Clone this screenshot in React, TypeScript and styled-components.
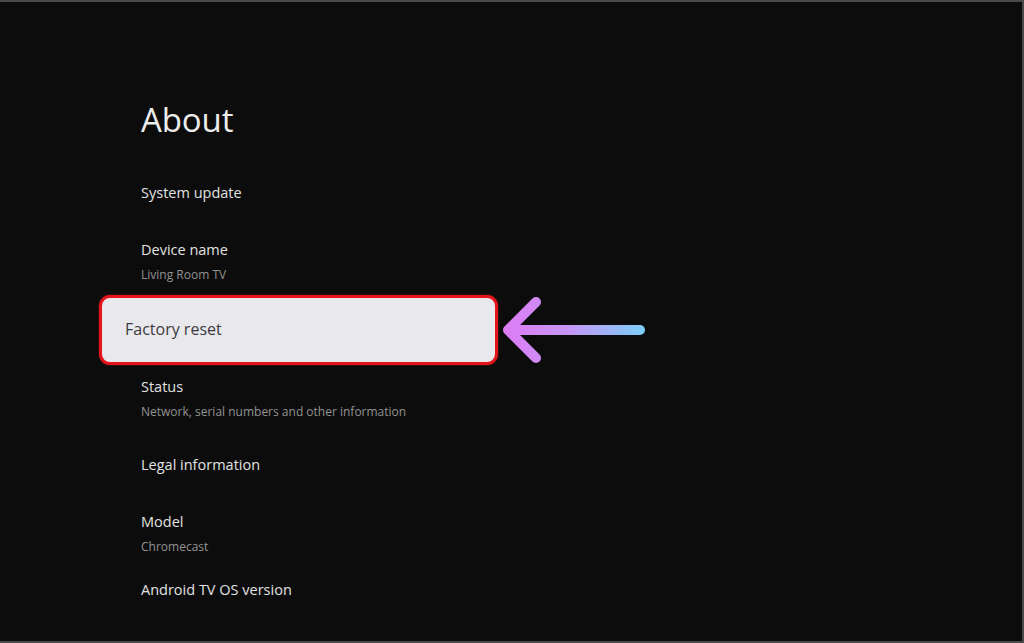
import React from 'react';
import styled, { createGlobalStyle } from 'styled-components';

const GlobalStyle = createGlobalStyle`
  html, body {
    margin: 0;
    padding: 0;
    background: #0b0b0b;
  }
  * {
    box-sizing: border-box;
  }
`;

type Entry = {
  title: string;
  subtitle?: string;
  top: number;
  focused?: boolean;
};

const entries: Entry[] = [
  { title: 'System update', top: 43 },
  { title: 'Device name', subtitle: 'Living Room TV', top: 37 },
  { title: 'Factory reset', top: 7, focused: true },
  { title: 'Status', subtitle: 'Network, serial numbers and other information', top: 10 },
  { title: 'Legal information', top: 32 },
  { title: 'Model', subtitle: 'Chromecast', top: 37 },
  { title: 'Android TV OS version', top: 22 },
];

const App = () => {
  return (
    <>
      <GlobalStyle />
      <Screen>
        <Panel>
          <Heading>About</Heading>
          <List>
            {entries.map((entry) =>
              entry.focused ? (
                <FocusRow key={entry.title} $top={entry.top}>
                  <FocusCard>
                    <FocusTitle>{entry.title}</FocusTitle>
                  </FocusCard>
                  <Arrow />
                </FocusRow>
              ) : (
                <Item key={entry.title} $top={entry.top}>
                  <ItemTitle>{entry.title}</ItemTitle>
                  {entry.subtitle && <ItemSubtitle>{entry.subtitle}</ItemSubtitle>}
                </Item>
              )
            )}
          </List>
        </Panel>
      </Screen>
    </>
  );
};

const Arrow = () => (
  <ArrowSvg width="150" height="74" viewBox="0 0 150 74">
    <defs>
      <linearGradient id="arrowGrad" x1="0" y1="0" x2="150" y2="0" gradientUnits="userSpaceOnUse">
        <stop offset="0" stopColor="#de7af4" />
        <stop offset="0.45" stopColor="#c796f6" />
        <stop offset="1" stopColor="#76d2f8" />
      </linearGradient>
    </defs>
    <path
      d="M140 37 H11 M36 9 L8 37 L36 65"
      fill="none"
      stroke="url(#arrowGrad)"
      strokeWidth="10"
      strokeLinecap="round"
      strokeLinejoin="round"
    />
  </ArrowSvg>
);

const Screen = styled.div`
  width: 1024px;
  height: 643px;
  background: #0c0c0c;
  border-top: 2px solid #4a4a4a;
  border-right: 2px solid #4a4a4a;
  border-bottom: 2px solid #4a4a4a;
  overflow: hidden;
  font-family: 'Open Sans', 'Liberation Sans', sans-serif;
`;

const Panel = styled.div`
  display: flex;
  flex-direction: column;
  padding: 98px 0 0 141px;
`;

const Heading = styled.h1`
  margin: 0;
  font-size: 33px;
  line-height: 40px;
  font-weight: 400;
  color: #ececec;
  letter-spacing: -0.1px;
`;

const List = styled.div`
  display: flex;
  flex-direction: column;
`;

const Item = styled.div<{ $top: number }>`
  display: flex;
  flex-direction: column;
  margin-top: ${({ $top }) => $top}px;
`;

const ItemTitle = styled.div`
  font-size: 14.5px;
  line-height: 20px;
  color: #e2e2e2;
`;

const ItemSubtitle = styled.div`
  margin-top: 4px;
  font-size: 12px;
  line-height: 22px;
  color: #939393;
`;

const FocusRow = styled.div<{ $top: number }>`
  display: flex;
  align-items: center;
  gap: 2px;
  margin-top: ${({ $top }) => $top}px;
  margin-left: -42px;
`;

const FocusCard = styled.div`
  width: 399px;
  height: 70px;
  display: flex;
  align-items: center;
  padding: 0 0 3px 23px;
  background: #e9e8ed;
  border: 3px solid #e3141c;
  border-radius: 11px;
  box-shadow: 0 0 2px rgba(255, 40, 40, 0.5);
`;

const FocusTitle = styled.span`
  font-size: 16px;
  color: #3b3b3f;
`;

const ArrowSvg = styled.svg`
  flex-shrink: 0;
  display: block;
`;

export default App;
